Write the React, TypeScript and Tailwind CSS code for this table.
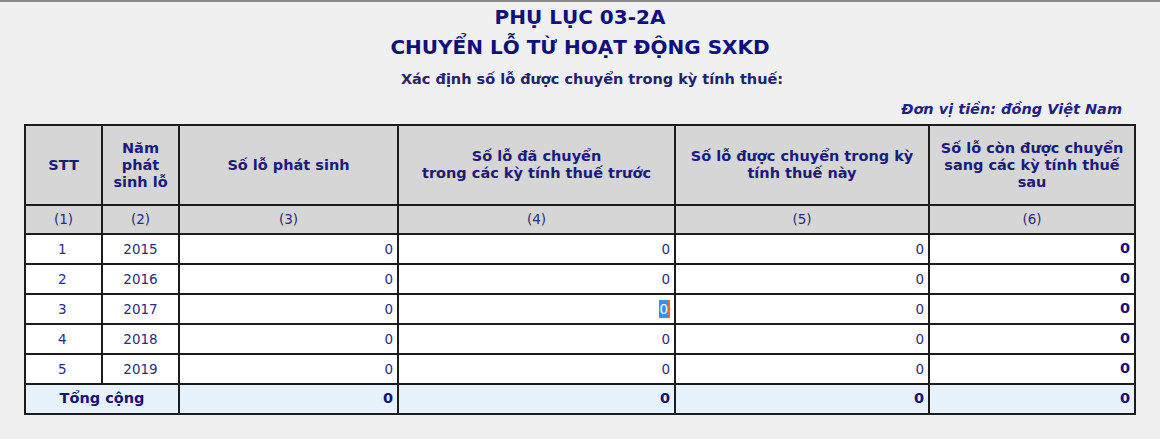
import React from 'react'

const rows = [
  { stt: 1, year: 2015 },
  { stt: 2, year: 2016 },
  { stt: 3, year: 2017 },
  { stt: 4, year: 2018 },
  { stt: 5, year: 2019 },
]

const cell = 'border-2 border-[#1c1c1c] px-[4px]'

export default function App() {
  return (
    <div
      className="min-h-[439px] w-[1160px] bg-[#f0f0f0] border-t-2 border-[#8a8a8a] text-[#1a1a80]"
      style={{ fontFamily: "Tahoma, 'DejaVu Sans', sans-serif" }}
    >
      {/* Titles */}
      <div className="text-center font-bold">
        <div className="h-[30px] leading-[30px] text-[20px] text-[#0f0f80]">PHỤ LỤC 03-2A</div>
        <div className="h-[30px] leading-[30px] text-[20px] text-[#0f0f80]">CHUYỂN LỖ TỪ HOẠT ĐỘNG SXKD</div>
        <div className="mt-[6px] h-[22px] pl-[24px] leading-[22px] text-[14.5px] text-[#22226e]">
          Xác định số lỗ được chuyển trong kỳ tính thuế:
        </div>
      </div>
      <div className="mt-[9px] h-[20px] leading-[20px] pr-[38px] text-right text-[14.5px] font-bold italic text-[#20208a]">
        Đơn vị tiền: đồng Việt Nam
      </div>

      {/* Table */}
      <div className="pl-[24px] mt-[5px]">
        <table className="table-fixed border-collapse w-[1110px] text-[13.5px]">
          <colgroup>
            <col className="w-[77px]" />
            <col className="w-[77px]" />
            <col className="w-[219px]" />
            <col className="w-[277px]" />
            <col className="w-[254px]" />
            <col className="w-[206px]" />
          </colgroup>
          <thead>
            <tr className="h-[80px] bg-[#d6d6d6] font-bold text-center text-[14.5px] leading-[17px] text-[#1a1a80]">
              <th className={cell}>STT</th>
              <th className={cell}>
                Năm
                <br />
                phát
                <br />
                sinh lỗ
              </th>
              <th className={cell}>Số lỗ phát sinh</th>
              <th className={cell}>
                Số lỗ đã chuyển
                <br />
                trong các kỳ tính thuế trước
              </th>
              <th className={cell}>
                Số lỗ được chuyển trong kỳ
                <br />
                tính thuế này
              </th>
              <th className={cell}>
                Số lỗ còn được chuyển
                <br />
                sang các kỳ tính thuế
                <br />
                sau
              </th>
            </tr>
            <tr className="h-[29px] bg-[#d6d6d6] text-center font-normal text-[#2a2a80]">
              {['(1)', '(2)', '(3)', '(4)', '(5)', '(6)'].map((n) => (
                <td key={n} className={cell}>
                  {n}
                </td>
              ))}
            </tr>
          </thead>
          <tbody className="bg-white text-[#2b2b85]">
            {rows.map((r) => (
              <tr key={r.stt} className="h-[30px]">
                <td className={`${cell} pl-[32px] text-left`}>{r.stt}</td>
                <td className={`${cell} text-center`}>{r.year}</td>
                <td className={`${cell} text-right`}>0</td>
                <td className={`${cell} text-right`}>
                  {r.stt === 3 ? (
                    <span className="inline-block bg-[#3390ff] text-white leading-[18px] border-r-2 border-[#e07020]">0</span>
                  ) : (
                    '0'
                  )}
                </td>
                <td className={`${cell} text-right`}>0</td>
                <td className={`${cell} text-right font-bold text-[14.5px] text-[#12127a]`}>0</td>
              </tr>
            ))}
            <tr className="h-[30px] bg-[#e6f2fc] font-bold text-[14.5px] text-[#12127a]">
              <td colSpan={2} className={`${cell} text-center`}>
                Tổng cộng
              </td>
              <td className={`${cell} text-right`}>0</td>
              <td className={`${cell} text-right`}>0</td>
              <td className={`${cell} text-right`}>0</td>
              <td className={`${cell} text-right`}>0</td>
            </tr>
          </tbody>
        </table>
      </div>
    </div>
  )
}
